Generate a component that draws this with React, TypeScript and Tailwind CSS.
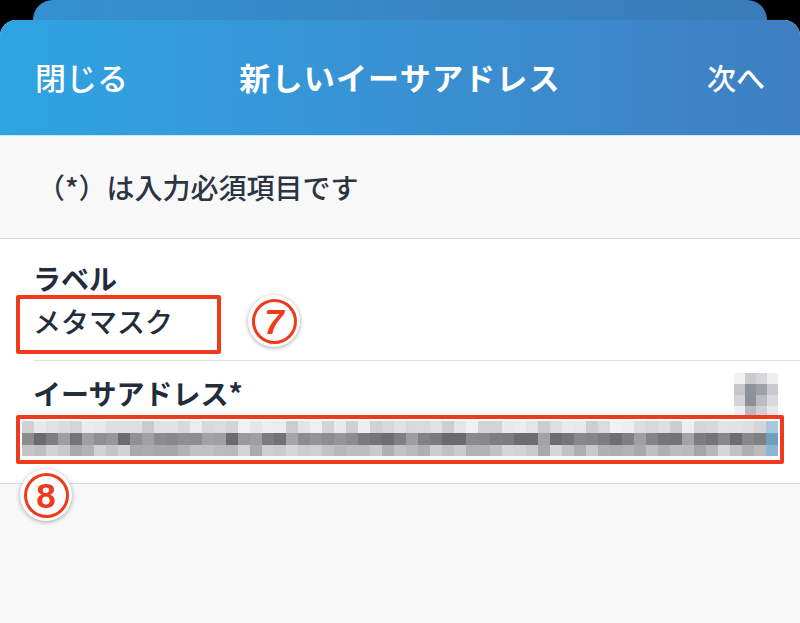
import React from "react";

const jp = { fontFamily: '"Noto Sans CJK JP", "Noto Sans", sans-serif' };

// deterministic noise for the pixelated (blurred) address
const rand = (seed: number) => {
  const x = Math.sin(seed * 12.9898 + 78.233) * 43758.5453;
  return x - Math.floor(x);
};

const gray = (v: number) => {
  const c = Math.round(v);
  return `rgb(${c},${c},${c + 2})`;
};

const AddressBlur = () => {
  const cols = 63;
  const rows = [
    { base: 222, spread: 40, h: "h-[12px]" },
    { base: 135, spread: 60, h: "h-[12px]" },
    { base: 190, spread: 50, h: "h-[11px]" },
  ];
  return (
    <div className="flex flex-col">
      {rows.map((r, ri) => (
        <div key={ri} className={`flex ${r.h}`}>
          {Array.from({ length: cols }).map((_, ci) => {
            const last = ci === cols - 1;
            const v = r.base + (rand(ri * 100 + ci) - 0.5) * r.spread;
            return (
              <div
                key={ci}
                className="w-[12px] h-full"
                style={{ background: last ? ["#a9c8dc", "#6f9fc0", "#8ab6d4"][ri] : gray(Math.min(248, v)) }}
              />
            );
          })}
        </div>
      ))}
    </div>
  );
};

const IconBlur = () => {
  const shades = [
    ["#f2f2f3", "#c9cbce", "#d6d7da", "#eeeeef"],
    ["#c4c6ca", "#8e939a", "#9da1a7", "#c8cacd"],
    ["#d3d5d8", "#8b9097", "#b9bcc0", "#d9dadc"],
    ["#eeeff0", "#b7babe", "#cfd1d3", "#e6e7e8"],
  ];
  return (
    <div className="flex flex-col">
      {shades.map((row, i) => (
        <div key={i} className="flex">
          {row.map((c, j) => (
            <div key={j} className="w-[11px] h-[11px]" style={{ background: c }} />
          ))}
        </div>
      ))}
    </div>
  );
};

const Circled = ({ n, italic }: { n: string; italic?: boolean }) => (
  <div className="w-[52px] h-[52px] rounded-full bg-white shadow-[0_1px_4px_rgba(0,0,0,0.35)] flex items-center justify-center">
    <div className="w-[45px] h-[45px] rounded-full border-[3px] border-[#ef3b1c] flex items-center justify-center">
      <span
        className={`text-[35px] font-bold leading-none text-[#ef3b1c] ${italic ? "italic" : ""}`}
        style={{ fontFamily: '"Liberation Sans", Arial, sans-serif' }}
      >
        {n}
      </span>
    </div>
  </div>
);

export default function App() {
  return (
    <div className="relative w-[800px] h-[623px] bg-black overflow-hidden flex flex-col" style={jp}>
      {/* stacked sheet behind */}
      <div className="h-[20px] mx-[33px] rounded-t-[20px] bg-gradient-to-r from-[#3490d0] to-[#3a7cba]" />

      {/* front sheet */}
      <div className="flex-1 flex flex-col rounded-t-[16px] overflow-hidden bg-[#f8f8f9]">
        <header className="h-[116px] grid grid-cols-[1fr_auto_1fr] items-center px-[35px] bg-gradient-to-r from-[#2ea4e3] to-[#3e7fc2] text-white border-b border-[#c9ecf9]">
          <span className="text-[31px] font-medium">閉じる</span>
          <span className="text-[31px] font-bold tracking-[1.2px]">新しいイーサアドレス</span>
          <span className="text-[29px] font-medium justify-self-end">次へ</span>
        </header>

        <div className="h-[103px] flex items-center pl-[37px] text-[28px] font-medium text-[#2b3442] border-b border-[#d8d8da]">
          （*）は入力必須項目です
        </div>

        <div className="bg-white">
          <div className="ml-[33px] h-[122px] border-b border-[#e1e1e3] pt-[19px] text-[#232c3a]">
            <div className="text-[28px] font-bold leading-[40px]">ラベル</div>
            <div className="text-[28px] font-medium leading-[40px] mt-[3px]">メタマスク</div>
          </div>
          <div className="h-[123px] border-b border-[#dcdcde] text-[#232c3a] relative">
            <div className="flex justify-between pl-[33px] pr-[22px] pt-[12px]">
              <div className="text-[28px] font-bold leading-[40px]">イーサアドレス*</div>
              <IconBlur />
            </div>
            <div className="pl-[22px] mt-[4px]">
              <AddressBlur />
            </div>
          </div>
        </div>
      </div>

      {/* annotation overlays */}
      <div className="absolute left-[16px] top-[295px] w-[205px] h-[59px] border-[4px] border-[#ef3b1c] rounded-[2px]" />
      <div className="absolute left-[248px] top-[295px]">
        <Circled n="7" italic />
      </div>
      <div className="absolute left-[16px] top-[415px] w-[768px] h-[49px] border-[4px] border-[#ef3b1c] rounded-[2px]" />
      <div className="absolute left-[20px] top-[469px]">
        <Circled n="8" />
      </div>
    </div>
  );
}
